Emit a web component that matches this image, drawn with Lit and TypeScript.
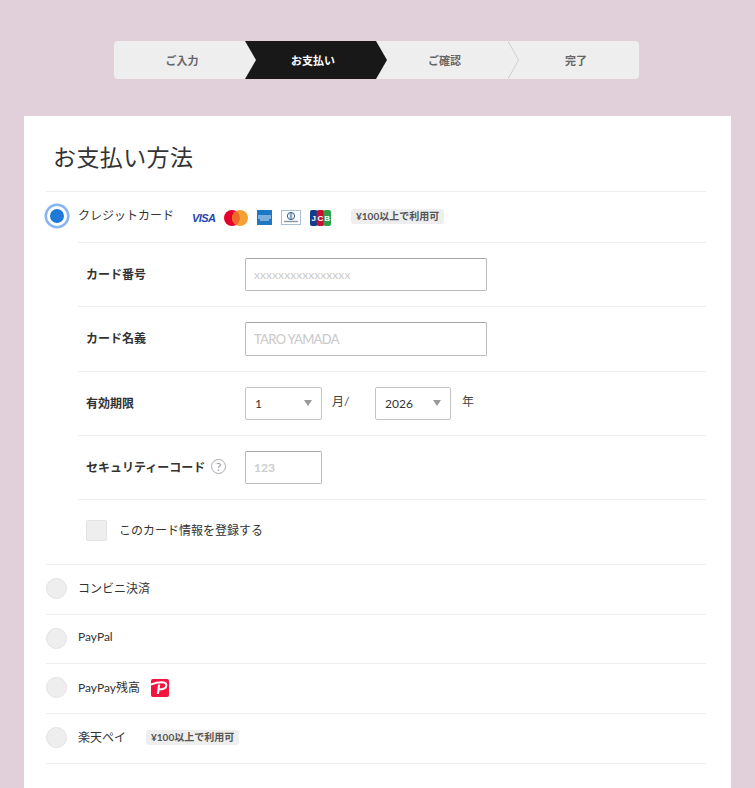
import { LitElement, html, svg, css } from "lit";
import { customElement } from "lit/decorators.js";

@customElement("app-root")
export class AppRoot extends LitElement {
  static styles = css`
    :host {
      display: block;
      height: 788px;
      overflow: hidden;
      background: #e1d0da;
      font-family: Lato, "Noto Sans CJK JP", sans-serif;
      color: #333;
    }

    .steps {
      display: grid;
      grid-template-columns: 131px 131px 132px 131px;
      height: 38px;
      width: 525px;
      margin-left: 114px;
      padding-top: 41px;
    }
    .step {
      position: relative;
      display: flex;
      align-items: center;
      justify-content: center;
      padding-left: 5px;
      background: #eee;
      color: #666;
      font-size: 11px;
      font-weight: 700;
    }
    .step:first-child { border-radius: 4px 0 0 4px; }
    .step:last-child { border-radius: 0 4px 4px 0; }
    .step.active { background: #181818; color: #fff; }
    .step svg {
      position: absolute;
      top: 0;
      left: 100%;
      z-index: 1;
      width: 11px;
      height: 38px;
    }

    .card {
      margin: 37px 24px 0;
      padding: 0 25px 0 22px;
      background: #fff;
      height: 700px;
    }
    h1 {
      margin: 0;
      height: 75px;
      padding: 25px 0 0 7px;
      box-sizing: border-box;
      font-size: 23px;
      line-height: 32px;
      font-weight: 400;
      letter-spacing: 0.4px;
      color: #333;
    }

    .method {
      display: flex;
      align-items: center;
      gap: 11px;
      box-sizing: border-box;
      padding-bottom: 2px;
      border-top: 1px solid #eee;
      font-size: 12px;
    }
    .method.h51 { height: 51px; }
    .method.h50 { height: 50px; }
    .method.h49 { height: 49px; }
    .method.last { height: 51px; border-bottom: 1px solid #eee; }
    .method .label { margin-bottom: 3px; }

    .radio {
      flex: none;
      box-sizing: border-box;
      width: 21px;
      height: 21px;
      border-radius: 50%;
      background: #eee;
      border: 1px solid #e2e2e2;
    }
    .radio.on {
      width: 20px;
      height: 20px;
      margin: 0 0.5px;
      border: 3px solid #fff;
      background: #2079d8;
      box-shadow: 0 0 0 2.5px #88b4f4;
    }

    .logos {
      display: flex;
      align-items: center;
      gap: 9px;
      margin-left: 7px;
      padding-top: 3px;
    }
    .visa {
      width: 23px;
      font-family: "Liberation Sans", sans-serif;
      font-size: 11px;
      font-weight: 700;
      font-style: italic;
      letter-spacing: -0.6px;
      color: #2546b0;
    }
    .logos svg { display: block; }

    .badge {
      display: inline-block;
      margin-left: 9px;
      padding: 0 5px;
      background: #eee;
      border-radius: 3px;
      color: #555;
      font-size: 10px;
      line-height: 15px;
      font-weight: 700;
    }

    .fields { margin-left: 32px; }
    .row {
      display: flex;
      align-items: center;
      box-sizing: border-box;
      height: 64px;
      border-top: 1px solid #eee;
      font-size: 12px;
    }
    .row.h65 { height: 65px; }
    .row .name {
      display: flex;
      align-items: center;
      gap: 6px;
      box-sizing: border-box;
      width: 167px;
      padding: 0 0 3px 8px;
      font-weight: 700;
      color: #333;
    }
    .help {
      display: inline-flex;
      align-items: center;
      justify-content: center;
      box-sizing: border-box;
      width: 15px;
      height: 15px;
      border: 1px solid #aaa;
      border-radius: 50%;
      color: #999;
      font-size: 12px;
      font-weight: 400;
    }
    .box {
      box-sizing: border-box;
      display: flex;
      align-items: center;
      height: 33px;
      padding-left: 8px;
      border: 1px solid #bbb;
      border-top-color: #a6a6a6;
      border-radius: 2px;
      color: #ccc;
      background: #fff;
    }
    .box.wide { width: 242px; }
    .box.narrow { width: 77px; }
    .box.card-no { font-size: 12px; letter-spacing: 0.05px; }
    .box.holder {
      height: 34px;
      font-size: 13px;
      font-weight: 500;
      letter-spacing: -0.7px;
    }
    .box.code { font-size: 12px; font-weight: 700; }

    .select {
      position: relative;
      box-sizing: border-box;
      display: flex;
      align-items: center;
      height: 33px;
      padding-left: 9px;
      border: 1px solid #c4c4c4;
      border-radius: 2px;
      color: #333;
      font-size: 12px;
    }
    .select::after {
      content: "";
      position: absolute;
      top: 12px;
      right: 9px;
      border-style: solid;
      border-width: 6px 4px 0;
      border-color: #999 transparent transparent;
    }
    .select.month { width: 77px; }
    .select.year { width: 76px; }
    .unit { margin: 0 0 7px 10px; color: #444; font-size: 12px; }
    .unit.month { width: 43px; }
    .unit.year { margin-left: 11px; }

    .save {
      display: flex;
      align-items: center;
      gap: 12px;
      box-sizing: border-box;
      height: 65px;
      padding: 0 0 3px 8px;
      border-top: 1px solid #eee;
      font-size: 12px;
    }
    .save .text { margin-bottom: 2px; }
    .check {
      box-sizing: border-box;
      width: 21px;
      height: 21px;
      background: #eee;
      border: 1px solid #e2e2e2;
      border-radius: 2px;
    }
    .paypay { display: block; }
  `;

  private arrow(fill: string, line?: string) {
    return html`<svg viewBox="0 0 11 38" aria-hidden="true">
      <path d="M0 0 L11 19 L0 38 Z" fill=${fill}></path>
      ${line ? svg`<path d="M0 0 L10.500 19 L0 38" fill="none" stroke=${line}></path>` : ""}
    </svg>`;
  }

  private cardLogos() {
    return html`<div class="logos">
      <span class="visa">VISA</span>
      <svg width="24" height="16" viewBox="0 0 24 16" aria-label="Mastercard">
        <circle cx="8" cy="8" r="8" fill="#e4002b"></circle>
        <circle cx="16" cy="8" r="8" fill="#f5a033"></circle>
        <path d="M12 1.100a8 8 0 0 1 0 13.800a8 8 0 0 1 0-13.800z" fill="#f0692a"></path>
      </svg>
      <svg width="15" height="15" viewBox="0 0 15 15" aria-label="American Express">
        <rect width="15" height="15" fill="#1e77c5"></rect>
        <path d="M1 6h13M1 8h13M3 10h9" stroke="#d5e6f5" stroke-width="1"></path>
      </svg>
      <svg width="20" height="15" viewBox="0 0 20 15" aria-label="Diners Club">
        <rect x=".5" y=".5" width="19" height="14" fill="#fff" stroke="#a9bfd8"></rect>
        <circle cx="10" cy="6" r="3.600" fill="none" stroke="#2a5a94"></circle>
        <path d="M9.300 3v6M10.700 3v6" stroke="#2a5a94" stroke-width=".7"></path>
        <path d="M3 11.500h14" stroke="#8b95a3" stroke-width="1.400"></path>
      </svg>
      <svg width="21" height="16" viewBox="0 0 21 16" aria-label="JCB">
        <rect width="7.500" height="16" rx="2" fill="#123c8c"></rect>
        <rect x="6.750" width="7.500" height="16" rx="2" fill="#c8102e"></rect>
        <rect x="13.500" width="7.500" height="16" rx="2" fill="#2e9e4a"></rect>
        <g fill="#fff" font-family="Liberation Sans" font-size="8" font-weight="700" text-anchor="middle">
          <text x="3.800" y="11">J</text>
          <text x="10.500" y="11">C</text>
          <text x="17.200" y="11">B</text>
        </g>
      </svg>
    </div>`;
  }

  render() {
    return html`
      <div class="steps">
        <div class="step">ご入力${this.arrow("#eee")}</div>
        <div class="step active">お支払い${this.arrow("#181818")}</div>
        <div class="step">ご確認${this.arrow("#eee", "#d0d0d0")}</div>
        <div class="step">完了</div>
      </div>

      <div class="card">
        <h1>お支払い方法</h1>

        <div class="method h51">
          <span class="radio on"></span>
          <span class="label">クレジットカード</span>
          ${this.cardLogos()}
          <span class="badge">¥100以上で利用可</span>
        </div>

        <div class="fields">
          <div class="row">
            <span class="name">カード番号</span>
            <div class="box wide card-no">xxxxxxxxxxxxxxxx</div>
          </div>
          <div class="row h65">
            <span class="name">カード名義</span>
            <div class="box wide holder">TARO YAMADA</div>
          </div>
          <div class="row">
            <span class="name">有効期限</span>
            <div class="select month">1</div>
            <span class="unit month">月/</span>
            <div class="select year">2026</div>
            <span class="unit year">年</span>
          </div>
          <div class="row">
            <span class="name">セキュリティーコード<span class="help">?</span></span>
            <div class="box narrow code">123</div>
          </div>
          <div class="save">
            <span class="check"></span>
            <span class="text">このカード情報を登録する</span>
          </div>
        </div>

        <div class="method h50">
          <span class="radio"></span><span class="label">コンビニ決済</span>
        </div>
        <div class="method h49">
          <span class="radio"></span><span class="label">PayPal</span>
        </div>
        <div class="method h50">
          <span class="radio"></span><span class="label">PayPay残高</span>
          <svg class="paypay" width="18" height="18" viewBox="0 0 18 18" aria-label="PayPay">
            <rect width="18" height="18" rx="2" fill="#f6123f"></rect>
            <path d="M0 5.500C5 3.500 10 3 13 3.500c3 .6 3 4.500.5 5.800-1.800 1-4 1.200-6 1.200" fill="none" stroke="#fff" stroke-width="2"></path>
            <path d="M7 5.500L5.800 15h2.200L9.200 5.500z" fill="#fff"></path>
          </svg>
        </div>
        <div class="method last">
          <span class="radio"></span><span class="label">楽天ペイ</span>
          <span class="badge">¥100以上で利用可</span>
        </div>
      </div>
    `;
  }
}
